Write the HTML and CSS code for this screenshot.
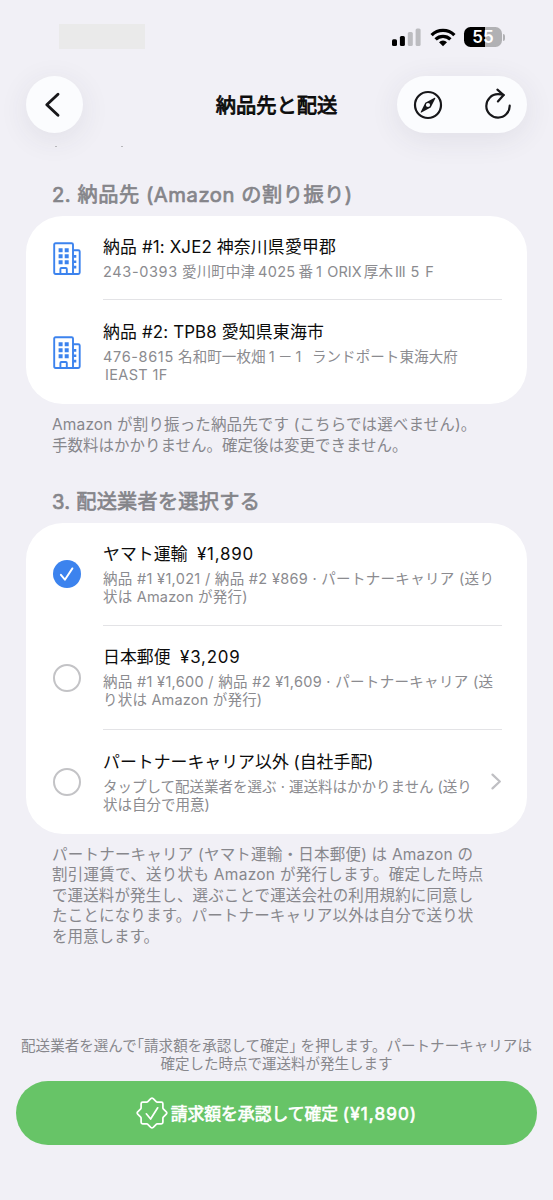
FILE: index.html
```html
<!DOCTYPE html>
<html lang="ja">
<head>
<meta charset="utf-8">
<title>納品先と配送</title>
<link rel="stylesheet" href="styles.css">
</head>
<body>
<div class="screen">
  <div class="status">
    <div class="redacted"></div>
    <div class="indicators">
      <svg class="signal" width="29" height="18" viewBox="0 0 29 18"><rect x="0" y="11.2" width="5" height="6.8" rx="1.5"/><rect x="7.9" y="8" width="5" height="10" rx="1.5"/><g fill="#bcbcc0"><rect x="15.8" y="4" width="5" height="14" rx="1.5"/><rect x="23.6" y="0.6" width="5" height="17.4" rx="1.5"/></g></svg>
      <svg class="wifi" width="26" height="19" viewBox="0 0 26 19"><g fill="none" stroke="#000" stroke-width="3.3"><path d="M1.6 7.1a16.3 16.3 0 0 1 22.8 0"/><path d="M5.6 11.4a10.6 10.6 0 0 1 14.8 0"/></g><path d="M13 18.2 9 14.2a5.8 5.8 0 0 1 8 0z"/></svg>
      <div class="battery"><span>55</span></div><div class="nub"></div>
    </div>
  </div>
  <div class="nav">
    <div class="pill back"><svg width="57" height="57" viewBox="0 0 57 57"><path d="M32 18.200 20.800 28.700 32 39.300" fill="none" stroke="#17171a" stroke-width="2.900" stroke-linecap="round" stroke-linejoin="round"/></svg></div>
    <h1>納品先と配送</h1>
    <div class="pill tools"><svg width="130" height="57" viewBox="0 0 130 57"><g fill="none" stroke="#17171a" stroke-width="2.2" stroke-linecap="round" stroke-linejoin="round"><circle cx="31" cy="29" r="13"/><path d="M112.700 29.700A11.7 11.7 0 1 1 101 18.200c2 0 4 .2 5.6.8"/><path d="m100.400 13.700 6.200 5.400-5.700 6.300"/></g><path fill="#17171a" fill-rule="evenodd" d="M37.6 21.7c.5-.2.9.2.7.7l-4.6 9.2-9.3 5c-.5.2-.9-.2-.7-.7l4.6-9.2zM31 26.9a2.1 2.1 0 1 0 0 4.2 2.1 2.1 0 0 0 0-4.2z"/></svg></div>
  </div>
  <div class="specks"><i></i><i></i></div>

  <h2 class="h-first">2. 納品先 (Amazon の割り振り)</h2>
  <section class="card places">
    <div class="row">
      <div class="lead"><svg width="28" height="34" viewBox="0 0 28 34"><use href="#building"/></svg></div>
      <div class="body"><div class="title t1">納品 #1: XJE2 神奈川県愛甲郡</div><div class="sub s1"><span class="wide">243-0393</span> 愛川町中津<span class="num">4025</span>番<span class="num">1</span><span class="orix">ORIX</span><span class="town">厚木</span><span class="roman">III</span> <span class="floor">5 F</span></div></div>
    </div>
    <div class="row">
      <div class="lead"><svg width="28" height="34" viewBox="0 0 28 34"><g id="building" stroke="#3c83ee" fill="none" stroke-width="1.9" stroke-linejoin="round"><path d="M20 32H2.6Q1.2 32 1.2 30.600V2.600Q1.200 1.200 2.600 1.200H18.600Q20 1.200 20 2.600V32M20 8.200H25.300Q26.700 8.200 26.700 9.600V30.600Q26.700 32 25.300 32H20M7.400 32V27Q7.400 26 8.400 26H12.800Q13.800 26 13.800 27V32"/><path stroke="none" fill="#3c83ee" d="M5.600 6.200h4v4h-4zm6.100 0h4v4h-4zM5.600 12.200h4v4h-4zm6.100 0h4v4h-4zM5.600 18.200h4v4h-4zm6.100 0h4v4h-4zM20.600 13h2.700v2.700h-2.700zm0 5.400h2.700v2.700h-2.700zm0 5.400h2.700v2.700h-2.700z"/></g></svg></div>
      <div class="body"><div class="title t2">納品 #2: TPB8 愛知県東海市</div><div class="sub s2"><span class="wide">476-8615</span> 名和町一枚畑<span class="num">1</span>－<span class="num">1</span> <span class="port">ランドポート東海大府</span></div><div class="sub s3">IEAST 1F</div></div>
    </div>
  </section>
  <div class="note after-places"><div class="n1">Amazon が割り振った納品先です (こちらでは選べません)。</div><div class="n2">手数料はかかりません。確定後は変更できません。</div></div>

  <h2 class="h-second">3. 配送業者を選択する</h2>
  <section class="card carriers">
    <div class="row">
      <div class="lead"><svg width="28" height="28" viewBox="0 0 28 28"><circle cx="14" cy="14" r="14" fill="#3c83ee"/><path d="m7.900 14.800 4 4.900 7.500-11.300" fill="none" stroke="#fff" stroke-width="1.900" stroke-linecap="round" stroke-linejoin="round"/></svg></div>
      <div class="body"><div class="title">ヤマト運輸 &nbsp;<span class="price">¥1,890</span></div><div class="sub s4">納品 #1 ¥1,021 / 納品 #2 ¥869 · パートナーキャリア (送り</div><div class="sub s5">状は Amazon が発行)</div></div>
    </div>
    <div class="row">
      <div class="lead"><div class="radio"></div></div>
      <div class="body"><div class="title">日本郵便 &nbsp;<span class="price">¥3,209</span></div><div class="sub s4">納品 #1 ¥1,600 / 納品 #2 ¥1,609 · パートナーキャリア (送</div><div class="sub s5">り状は Amazon が発行)</div></div>
    </div>
    <div class="row">
      <div class="lead"><div class="radio"></div></div>
      <div class="body"><div class="title">パートナーキャリア以外 (自社手配)</div><div class="sub">タップして配送業者を選ぶ · 運送料はかかりません (送り</div><div class="sub">状は自分で用意)</div></div>
      <svg class="chevron" width="11" height="17" viewBox="0 0 11 17"><path d="m1.500 1.600 7.300 6.900-7.300 6.900" fill="none" stroke="#bfbfc3" stroke-width="2.200" stroke-linecap="round" stroke-linejoin="round"/></svg>
    </div>
  </section>
  <div class="note"><div class="n3">パートナーキャリア (ヤマト運輸・日本郵便) は Amazon の</div><div class="n4">割引運賃で、送り状も Amazon が発行します。確定した時点</div><div class="n5">で運送料が発生し、選ぶことで運送会社の利用規約に同意し</div><div class="n6">たことになります。パートナーキャリア以外は自分で送り状</div><div class="n7">を用意します。</div></div>

  <footer>
    <div class="hint"><div class="f1">配送業者を選んで<span class="half">「</span>請求額を承認して確定<span class="half">」</span> を押します。パートナーキャリアは</div><div class="f2">確定した時点で運送料が発生します</div></div>
    <div class="confirm">
      <svg width="32" height="32" viewBox="0 0 32 32" fill="none" stroke="#fff" stroke-width="1.700" stroke-linecap="round" stroke-linejoin="round"><path d="M14.800 1.700Q16 .700 17.200 1.700L20.200 4.700Q20.600 5.100 21.200 5.100H25.300Q26.900 5.100 26.900 6.700V10.800Q26.900 11.400 27.300 11.800L30.300 14.800Q31.300 16 30.300 17.200L27.300 20.200Q26.900 20.600 26.900 21.200V25.300Q26.900 26.900 25.300 26.900H21.200Q20.600 26.900 20.200 27.300L17.200 30.300Q16 31.300 14.800 30.300L11.800 27.300Q11.400 26.900 10.800 26.900H6.700Q5.100 26.900 5.100 25.300V21.200Q5.100 20.600 4.700 20.200L1.700 17.200Q.700 16 1.700 14.800L4.700 11.800Q5.100 11.400 5.100 10.800V6.700Q5.100 5.100 6.700 5.100H10.800Q11.400 5.100 11.800 4.700Z"/><path d="m10.300 16.800 4.300 5.200 7.100-11.200"/></svg>
      <span>請求額を承認して確定 <span class="amount">(¥1,890)</span></span>
    </div>
  </footer>
</div>
</body>
</html>
```
FILE: styles.css
```css
* { box-sizing: border-box; }
body { margin: 0; background: #f1f0f6; font-family: Inter, "Noto Sans CJK JP", sans-serif; color: #0c0c0c; }
.screen { width: 553px; height: 1200px; overflow: hidden; display: flex; flex-direction: column; white-space: nowrap; }
.status { height: 76px; flex: none; display: flex; justify-content: space-between; align-items: flex-start; padding: 24px 48px 0 59px; }
.redacted { width: 86px; height: 25px; background: #eaeaea; }
.indicators { display: flex; align-items: center; padding-top: 3px; }
.wifi { margin: 0 8px 0 9px; }
.battery { width: 38px; height: 20px; border-radius: 6.5px; background: linear-gradient(90deg, #000 21px, #b1b1b4 21px); color: #fff; font-size: 17px; font-weight: 600; line-height: 20px; text-align: center; }
.nub { width: 2px; height: 7px; margin-left: 1px; border-radius: 0 3px 3px 0; background: #b1b1b4; }
.nav { height: 57px; flex: none; padding: 0 26px; display: grid; grid-template-columns: 130px 1fr 130px; align-items: center; }
.pill { height: 57px; border-radius: 29px; background: #fbfcfe; box-shadow: 0 6px 30px rgba(60, 55, 80, .09); }
.pill svg { display: block; }
.back { width: 57px; }
h1 { margin: 0; padding-top: 2px; text-align: center; font-size: 20.300px; font-weight: 400; -webkit-text-stroke: .85px currentColor; line-height: 30px; }
.specks { height: 47px; flex: none; padding: 13px 0 0 55px; display: flex; gap: 64px; }
.specks i { width: 2px; height: 1px; background: #b7b7bb; }
h2 { margin: 0; flex: none; padding: 1px 0 0 52px; height: 36px; line-height: 28px; font-size: 20.200px; font-weight: 400; -webkit-text-stroke: .7px currentColor; color: #85858a; }
.h-first { letter-spacing: .55px; }
.h-second { letter-spacing: .24px; }
.card { flex: none; margin: 0 26px; background: #fff; border-radius: 37px; }
.row { display: flex; align-items: center; padding-right: 25px; }
.lead { width: 77px; padding-left: 27px; display: flex; }
.body { flex: 1; min-width: 0; align-self: stretch; padding: 18px 0; border-bottom: 1px solid #e3e3e6; }
.row:last-child .body { border-bottom: 0; padding: 19px 0 20px; }
.title { height: 29px; line-height: 26px; font-size: 16.900px; }
.t1, .t2 { letter-spacing: .14px; }
.price { letter-spacing: .8px; }
.sub { height: 18px; line-height: 18px; font-size: 14.500px; color: #8b8b8f; }
.s1 { letter-spacing: .1px; }
.s2 { letter-spacing: .1px; }
.s3 { letter-spacing: .35px; padding-left: 2px; }
.s4 { letter-spacing: .31px; }
.s5 { letter-spacing: .2px; }
.wide { letter-spacing: .65px; }
.num { letter-spacing: .3px; margin: 0 3px; }
.orix { margin-left: 2px; }
.town { margin: 0 2px; }
.port { margin-left: 3px; }
.floor { letter-spacing: 1px; margin-left: 1px; }
.places .row { height: 84px; }
.places .row:last-child { height: 104px; }
.places .lead { padding-top: 1px; }
.carriers .row { height: 104px; }
.carriers .row:first-child { height: 103px; }
.note { flex: none; padding: 11px 0 0 52px; font-size: 15.500px; line-height: 20.500px; color: #87878c; }
.radio { width: 28px; height: 28px; border: 2px solid #c3c3c6; border-radius: 50%; }
.after-places { height: 82.500px; }
.n1 { letter-spacing: .14px; }
.n3 { letter-spacing: .22px; }
.n4 { letter-spacing: .28px; }
.n5 { letter-spacing: .12px; }
.n6 { letter-spacing: .17px; }
.roman { letter-spacing: -.500px; }
footer { margin-top: auto; padding: 0 16px 55px; }
.hint { text-align: center; font-size: 14.500px; line-height: 18px; color: #87878c; margin-bottom: 8px; }
.f1 { letter-spacing: .05px; }
.half { font-feature-settings: "halt"; }
.confirm { height: 64px; border-radius: 32px; background: #67c467; color: #fff; display: flex; align-items: center; justify-content: center; gap: 3px; font-size: 16.800px; font-weight: 400; -webkit-text-stroke: .65px currentColor; }
.confirm svg { flex: none; }
.amount { font-size: 17.200px; letter-spacing: 1.1px; }
```
